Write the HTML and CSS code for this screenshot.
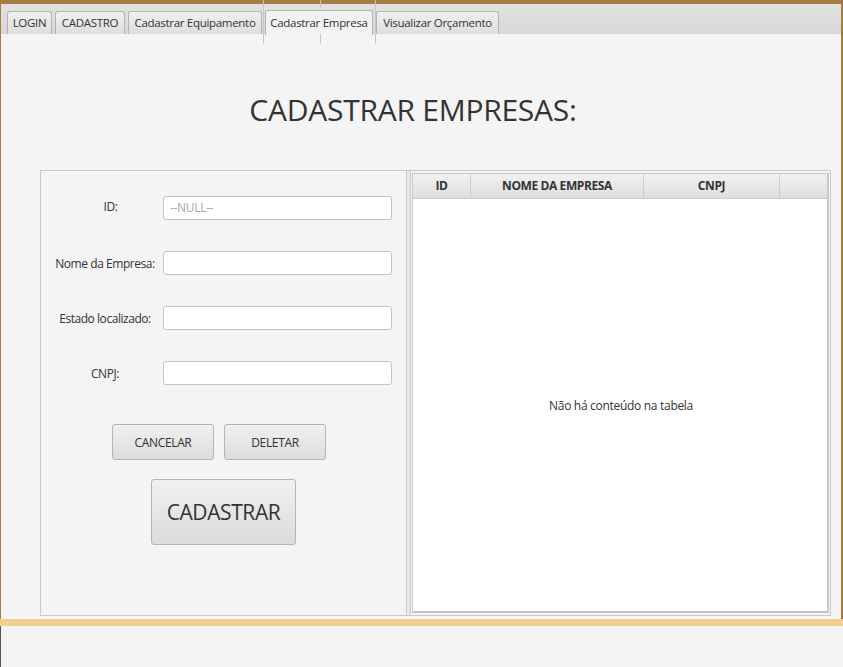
FILE: index.html
```html
<!DOCTYPE html>
<html lang="pt">
<head>
<meta charset="utf-8">
<title>Cadastrar Empresa</title>
<link rel="stylesheet" href="styles.css">
</head>
<body>
<div class="window">
  <div class="topbar"></div>
  <div class="tabbar">
    <div class="tab t-login">LOGIN</div>
    <div class="tab t-cad">CADASTRO</div>
    <div class="tab t-equip">Cadastrar Equipamento</div>
    <div class="tab t-emp tab-active">Cadastrar Empresa</div>
    <div class="tab t-orc">Visualizar Orçamento</div>
    <span class="guide g1"></span>
    <span class="guide g2"></span>
    <span class="guide g2b"></span>
    <span class="guide g3"></span>
  </div>
  <div class="content">
    <h1 class="title">CADASTRAR EMPRESAS:</h1>
    <div class="split">
      <div class="form-pane">
        <div class="row">
          <label class="lbl lbl-id">ID:</label>
          <div class="field placeholder">--NULL--</div>
        </div>
        <div class="row">
          <label class="lbl">Nome da Empresa:</label>
          <div class="field"></div>
        </div>
        <div class="row">
          <label class="lbl">Estado localizado:</label>
          <div class="field"></div>
        </div>
        <div class="row">
          <label class="lbl">CNPJ:</label>
          <div class="field"></div>
        </div>
        <div class="btn-row">
          <button class="btn">CANCELAR</button>
          <button class="btn">DELETAR</button>
        </div>
        <div class="big-row">
          <button class="btn btn-big">CADASTRAR</button>
        </div>
      </div>
      <div class="divider"></div>
      <div class="table-pane">
        <div class="table">
          <div class="thead">
            <div class="th c-id">ID</div>
            <div class="th c-nome">NOME DA EMPRESA</div>
            <div class="th c-cnpj">CNPJ</div>
            <div class="th c-fill"></div>
          </div>
          <div class="tbody">Não há conteúdo na tabela</div>
        </div>
      </div>
    </div>
  </div>
  <div class="bottom-band"></div>
  <div class="bottom"></div>
</div>
</body>
</html>
```
FILE: styles.css
```css
* { box-sizing: border-box; }
html, body { margin: 0; padding: 0; }
body {
  width: 843px;
  height: 667px;
  overflow: hidden;
  background: #f3f3f3;
  font-family: "Open Sans", "Noto Sans", sans-serif;
  color: #333;
}
.window {
  display: flex;
  flex-direction: column;
  height: 667px;
}
.topbar {
  height: 4px;
  background: #a67d40;
}
.tabbar {
  position: relative;
  height: 30px;
  background: linear-gradient(#e2e2e2, #d8d8d8);
  border-left: 1px solid #a67d40;
  border-right: 2px solid #a67d40;
  display: flex;
  align-items: flex-end;
  padding-left: 6px;
  gap: 3px;
}
.tab {
  height: 23px;
  border: 1px solid #b3b3b3;
  border-bottom: none;
  border-radius: 3px 3px 0 0;
  background: linear-gradient(#f0f0f0, #dedede);
  font-size: 11.5px;
  line-height: 21px;
  color: #333;
  white-space: nowrap;
  text-align: center;
  letter-spacing: -0.3px;
}
.t-login { width: 45px; }
.t-cad { width: 70px; }
.t-equip { width: 134px; }
.t-emp { width: 108px; }
.t-orc { width: 123px; }
.tab-active {
  height: 25px;
  line-height: 23px;
  background: #f2f2f2;
  position: relative;
  top: 1px;
}
.guide {
  position: absolute;
  top: -4px;
  width: 1px;
  height: 44px;
  background: #c6c6c6;
}
.g1 { left: 262px; }
.g2 { left: 319px; height: 8px; }
.g2b { left: 319px; top: 30px; height: 10px; }
.g3 { left: 374px; }
.content {
  flex: 0 0 585px;
  background: #f4f4f4;
  border-left: 1px solid #a67d40;
  border-right: 2px solid #a67d40;
  display: flex;
  flex-direction: column;
  align-items: flex-start;
}
.title {
  margin: 56px 0 0 0;
  align-self: center;
  font-weight: 400;
  font-size: 30px;
  line-height: 40px;
  color: #333;
  letter-spacing: -0.25px;
  position: relative;
  left: -8px;
}
.split {
  margin: 40px 0 0 39px;
  width: 791px;
  height: 446px;
  border: 1px solid #c9c9c9;
  display: flex;
  background: #f4f4f4;
}
.form-pane {
  width: 365px;
  padding: 25px 0 0 14px;
  display: flex;
  flex-direction: column;
}
.row {
  display: flex;
  align-items: center;
  height: 24px;
  margin-bottom: 31px;
}
.lbl {
  width: 108px;
  padding-right: 8px;
  text-align: center;
  font-size: 12px;
  color: #333;
  letter-spacing: -0.45px;
  white-space: nowrap;
}
.lbl-id { padding-left: 3px; padding-right: 0; position: relative; top: -2px; }
.field {
  width: 229px;
  height: 24px;
  background: #fff;
  border: 1px solid #c4c4c4;
  border-radius: 3px;
  font-size: 12px;
  line-height: 22px;
  padding-left: 6px;
}
.placeholder { color: #a6a6a6; letter-spacing: -0.3px; }
.btn-row {
  display: flex;
  gap: 10px;
  margin: 8px 0 0 57px;
}
.btn {
  font-family: inherit;
  width: 102px;
  height: 36px;
  border: 1px solid #b5b5b5;
  border-radius: 3px;
  background: linear-gradient(#f0f0f0, #dcdcdc);
  font-size: 12px;
  color: #333;
  padding: 0;
  letter-spacing: -0.35px;
}
.big-row {
  margin: 19px 0 0 96px;
}
.btn-big {
  width: 145px;
  height: 66px;
  font-size: 21px;
  letter-spacing: -0.4px;
}
.divider {
  width: 5px;
  border-left: 1px solid #c9c9c9;
  border-right: 1px solid #c9c9c9;
  background: linear-gradient(90deg, #eeeeee, #e2e2e2);
}
.table-pane {
  flex: 1;
  padding: 2px 0 2px 1px;
}
.table {
  width: 417px;
  height: 440px;
  border: 1px solid #c9c9c9;
  border-right-width: 2px;
  border-bottom-width: 2px;
  border-bottom-color: #c4c4c4;
  display: flex;
  flex-direction: column;
  background: #fff;
}
.thead {
  display: flex;
  height: 25px;
  border-bottom: 1px solid #cdcdcd;
  background: linear-gradient(#f1f1f1, #dedede);
}
.th {
  border-right: 1px solid #cdcdcd;
  font-size: 12px;
  font-weight: 700;
  line-height: 24px;
  text-align: center;
  color: #333;
  letter-spacing: -0.4px;
}
.c-id { width: 58px; }
.c-nome { width: 173px; }
.c-cnpj { width: 136px; }
.c-fill { flex: 1; border-right: none; }
.tbody {
  flex: 1;
  display: flex;
  align-items: center;
  justify-content: center;
  font-size: 12px;
  color: #333;
  letter-spacing: -0.3px;
  padding-left: 2px;
}
.bottom-band {
  height: 7px;
  background: #f2ce92;
}
.bottom {
  flex: 1;
  background: #f3f3f3;
  border-left: 1px solid #555;
}
```
